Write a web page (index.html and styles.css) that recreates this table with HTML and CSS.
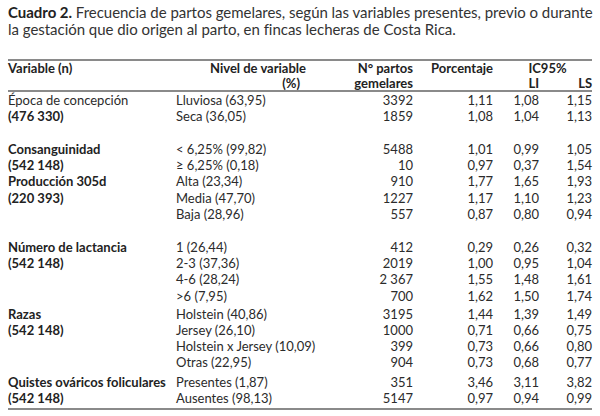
FILE: index.html
```html
<!DOCTYPE html>
<html lang="es">
<head>
<meta charset="utf-8">
<title>Cuadro 2</title>
<link rel="stylesheet" href="styles.css">
</head>
<body>
<p class="caption"><b>Cuadro 2.</b> Frecuencia de partos gemelares, según las variables presentes, previo o durante<br>la gestación que dio origen al parto, en fincas lecheras de Costa Rica.</p>
<table class="data">
  <colgroup>
    <col class="c-var"><col class="c-niv"><col class="c-n"><col class="c-pct"><col class="c-li"><col class="c-ls">
  </colgroup>
  <thead>
    <tr class="h1">
      <th class="l">Variable (n)</th>
      <th class="niv">Nivel de variable</th>
      <th class="r">N° partos</th>
      <th class="r">Porcentaje</th>
      <th class="ic" colspan="2">IC95%</th>
    </tr>
    <tr class="h2">
      <th></th>
      <th class="niv"><span class="pct">(%)</span></th>
      <th class="r">gemelares</th>
      <th></th>
      <th class="r">LI</th>
      <th class="r">LS</th>
    </tr>
  </thead>
  <tbody>
    <tr><td class="plain">Época de concepción</td><td>Lluviosa (63,95)</td><td class="r">3392</td><td class="r">1,11</td><td class="r">1,08</td><td class="r">1,15</td></tr>
    <tr><td class="b">(476 330)</td><td>Seca (36,05)</td><td class="r">1859</td><td class="r">1,08</td><td class="r">1,04</td><td class="r">1,13</td></tr>
    <tr class="sp1"><td colspan="6"></td></tr>
    <tr><td class="b">Consanguinidad</td><td>&lt; 6,25% (99,82)</td><td class="r">5488</td><td class="r">1,01</td><td class="r">0,99</td><td class="r">1,05</td></tr>
    <tr><td class="b">(542 148)</td><td>≥ 6,25% (0,18)</td><td class="r">10</td><td class="r">0,97</td><td class="r">0,37</td><td class="r">1,54</td></tr>
    <tr><td class="b">Producción 305d</td><td>Alta (23,34)</td><td class="r">910</td><td class="r">1,77</td><td class="r">1,65</td><td class="r">1,93</td></tr>
    <tr><td class="b">(220 393)</td><td>Media (47,70)</td><td class="r">1227</td><td class="r">1,17</td><td class="r">1,10</td><td class="r">1,23</td></tr>
    <tr><td></td><td>Baja (28,96)</td><td class="r">557</td><td class="r">0,87</td><td class="r">0,80</td><td class="r">0,94</td></tr>
    <tr class="sp2"><td colspan="6"></td></tr>
    <tr><td class="b">Número de lactancia</td><td>1 (26,44)</td><td class="r">412</td><td class="r">0,29</td><td class="r">0,26</td><td class="r">0,32</td></tr>
    <tr><td class="b">(542 148)</td><td>2-3 (37,36)</td><td class="r">2019</td><td class="r">1,00</td><td class="r">0,95</td><td class="r">1,04</td></tr>
    <tr><td></td><td>4-6 (28,24)</td><td class="r">2 367</td><td class="r">1,55</td><td class="r">1,48</td><td class="r">1,61</td></tr>
    <tr><td></td><td>&gt;6 (7,95)</td><td class="r">700</td><td class="r">1,62</td><td class="r">1,50</td><td class="r">1,74</td></tr>
    <tr class="g2"><td class="b">Razas</td><td>Holstein (40,86)</td><td class="r">3195</td><td class="r">1,44</td><td class="r">1,39</td><td class="r">1,49</td></tr>
    <tr><td class="b">(542 148)</td><td>Jersey (26,10)</td><td class="r">1000</td><td class="r">0,71</td><td class="r">0,66</td><td class="r">0,75</td></tr>
    <tr><td></td><td class="nw">Holstein x Jersey (10,09)</td><td class="r">399</td><td class="r">0,73</td><td class="r">0,66</td><td class="r">0,80</td></tr>
    <tr><td></td><td>Otras (22,95)</td><td class="r">904</td><td class="r">0,73</td><td class="r">0,68</td><td class="r">0,77</td></tr>
    <tr class="g3"><td class="b">Quistes ováricos foliculares</td><td>Presentes (1,87)</td><td class="r">351</td><td class="r">3,46</td><td class="r">3,11</td><td class="r">3,82</td></tr>
    <tr class="last"><td class="b">(542 148)</td><td>Ausentes (98,13)</td><td class="r">5147</td><td class="r">0,97</td><td class="r">0,94</td><td class="r">0,99</td></tr>
  </tbody>
</table>
</body>
</html>
```
FILE: styles.css
```css
html, body {
  margin: 0;
  padding: 0;
  background: #ffffff;
}
body {
  padding: 4px 8px 0 8px;
  font-family: Lato, "Open Sans", sans-serif;
  color: #2b2b2b;
}
.caption {
  margin: 0;
  white-space: nowrap;
  font-size: 15px;
  letter-spacing: -0.03px;
  line-height: 17px;
  color: #333333;
}
.caption b {
  color: #222222;
}
.data {
  margin-top: 21px;
  width: 584px;
  border-collapse: collapse;
  table-layout: fixed;
  font-size: 13px;
}
.c-var { width: 168px; }
.c-niv { width: 130px; }
.c-n { width: 107px; }
.c-pct { width: 80px; }
.c-li { width: 46px; }
.c-ls { width: 53px; }
.data th, .data td {
  padding: 0;
  white-space: nowrap;
}
.data thead th {
  font-weight: bold;
  line-height: 14.5px;
  color: #222222;
  text-align: left;
}
.data thead tr.h1 th {
  border-top: 2px solid #8a8a8a;
}
.data thead tr.h2 th {
  border-bottom: 2px solid #8a8a8a;
}
.data thead th.niv {
  text-align: right;
}
.data thead th.r, .data td.r {
  text-align: right;
}
.data thead th.ic {
  text-align: center;
  padding-left: 10px;
}
.pct {
  padding-right: 6px;
}
.data tbody td {
  line-height: 16.3px;
  height: 16.3px;
}
.data td.b {
  font-weight: bold;
  color: #222222;
}
.sp1 td { height: 14.3px; line-height: 14.3px; }
.sp2 td { height: 18.5px; line-height: 18.5px; }
.g2 td { padding-top: 1.7px; }
.g3 td { padding-top: 2.8px; }
.last td {
  border-bottom: 2px solid #8a8a8a;
  padding-bottom: 2px;
}
```
